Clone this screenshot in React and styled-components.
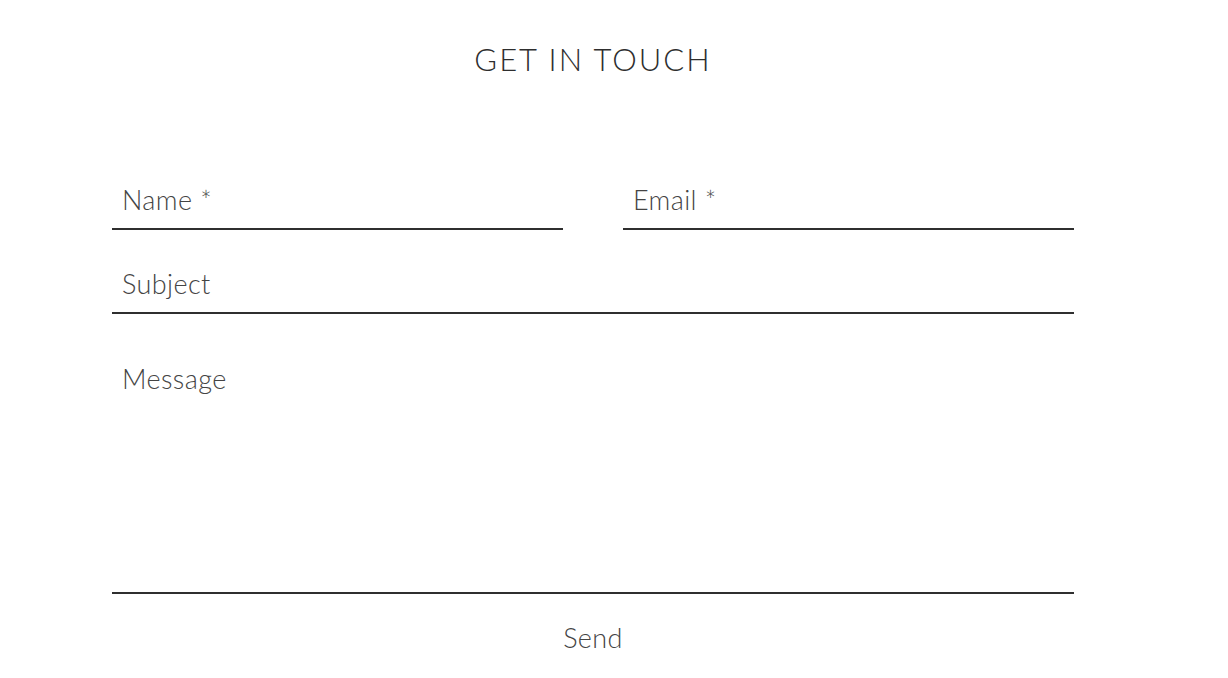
import React from "react";
import styled, { createGlobalStyle } from "styled-components";

const Global = createGlobalStyle`
  html, body { margin: 0; padding: 0; background: #fff; }
  body { font-family: "Lato", "Liberation Sans", sans-serif; }
`;

const Page = styled.div`
  width: 962px;
  margin-left: 112px;
  padding-top: 37px;
  display: flex;
  flex-direction: column;
  align-items: stretch;
`;

const Title = styled.h2`
  margin: 0;
  text-align: center;
  font-family: "Lato", sans-serif;
  font-weight: 300;
  font-size: 31px;
  line-height: 44px;
  letter-spacing: 2px;
  color: #2e2e2e;
`;

const Form = styled.form`
  margin-top: 95px;
  display: flex;
  flex-direction: column;
  gap: 30px;
`;

const Row = styled.div`
  display: grid;
  grid-template-columns: 1fr 1fr;
  column-gap: 60px;
`;

const fieldText = `
  font-family: "Lato", "Liberation Sans", sans-serif;
  font-weight: 300;
  font-size: 27px;
  letter-spacing: 0.4px;
  color: #333;
  &::placeholder { color: #444; opacity: 1; }
`;

const Input = styled.input`
  ${fieldText}
  box-sizing: border-box;
  width: 100%;
  height: 54px;
  border: none;
  border-bottom: 2px solid #2f2f2f;
  padding: 0 10px 6px;
  outline: none;
  background: transparent;
`;

const TextArea = styled.textarea`
  ${fieldText}
  box-sizing: border-box;
  width: 100%;
  height: 252px;
  border: none;
  border-bottom: 2px solid #2f2f2f;
  padding: 20px 10px;
  line-height: 34px;
  outline: none;
  resize: none;
  background: transparent;
  margin-top: -2px;
`;

const SendButton = styled.button`
  align-self: center;
  margin-top: -2px;
  border: none;
  background: transparent;
  padding: 0;
  font-family: "Lato", "Liberation Sans", sans-serif;
  font-weight: 300;
  font-size: 27px;
  letter-spacing: 0.4px;
  line-height: 32px;
  color: #444;
  cursor: pointer;
`;

export default function App() {
  return (
    <>
      <Global />
      <Page>
        <Title>GET IN TOUCH</Title>
        <Form onSubmit={(e) => e.preventDefault()}>
          <Row>
            <Input type="text" placeholder="Name *" />
            <Input type="email" placeholder="Email *" />
          </Row>
          <Input type="text" placeholder="Subject" />
          <TextArea placeholder="Message" />
          <SendButton type="submit">Send</SendButton>
        </Form>
      </Page>
    </>
  );
}
